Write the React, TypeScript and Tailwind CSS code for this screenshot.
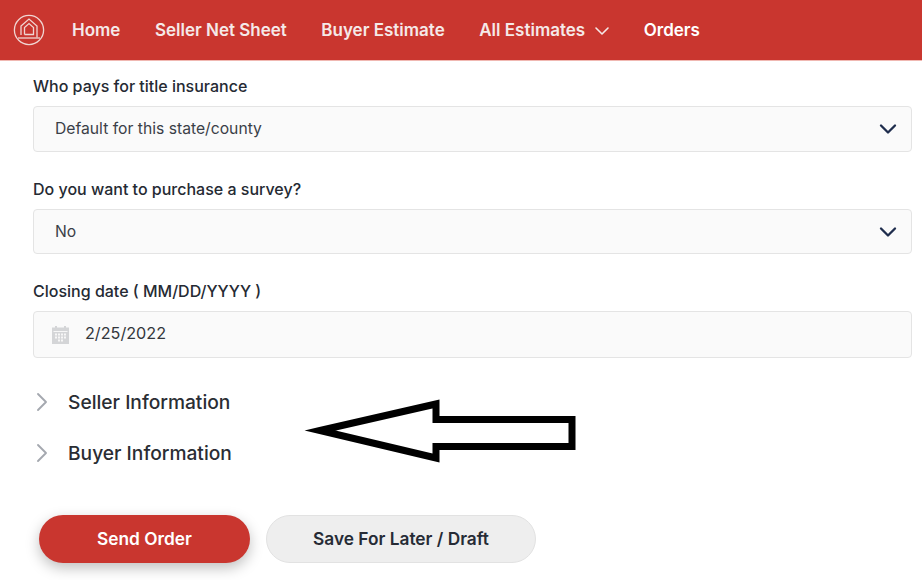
import { ChevronDown, ChevronRight } from 'lucide-react'

const navLinks = ['Home', 'Seller Net Sheet', 'Buyer Estimate']

function Logo() {
  return (
    <svg width="32" height="32" viewBox="0 0 32 32" fill="none" stroke="#f0d5d2" strokeWidth="1.3">
      <circle cx="16" cy="16" r="14.6" />
      <path d="M8 21V12L16 5L24 12V23.5" />
      <path d="M11.5 20.5V13.5L16 9.5L20.5 13.5V20.5H11.5" />
      <path d="M5 24H27" />
    </svg>
  )
}

function SelectField({ label, value, tall }: { label: string; value: string; tall?: boolean }) {
  return (
    <div className="flex flex-col">
      <label className="mb-[10px] h-[20px] text-[16px] leading-[20px] font-medium text-[#252a33]">{label}</label>
      <div
        className={
          tall
            ? 'flex h-[46px] items-center justify-between rounded-[4px] border border-[#e4e4e4] bg-[#fafafa] pl-[21px] pr-[9px]'
            : 'flex h-[45px] items-center justify-between rounded-[4px] border border-[#e4e4e4] bg-[#fafafa] pl-[21px] pr-[9px]'
        }
      >
        <span className="text-[15.7px] text-[#3a3f48]">{value}</span>
        <ChevronDown size={28} strokeWidth={2} className="text-[#1f2d4d]" />
      </div>
    </div>
  )
}

function Section({ title }: { title: string }) {
  return (
    <div className="flex h-[51px] items-center">
      <ChevronRight size={32} strokeWidth={1.4} className="ml-[-7px] mt-[-2px] text-[#a4a8af]" />
      <span className="ml-[10px] text-[19.2px] font-medium text-[#2a2d33]">{title}</span>
    </div>
  )
}

export default function App() {
  return (
    <div className="relative h-[580px] w-[922px] overflow-hidden bg-white font-['Inter','Liberation_Sans',sans-serif]">
      {/* Nav */}
      <header className="flex h-[61px] items-center border-b border-[#f0b8b2] bg-[#c9362f] pl-[13px]">
        <Logo />
        <nav className="ml-[27px] flex items-center gap-[34.5px] pt-[2px] text-[17px] font-semibold text-[#f5e9e8]">
          {navLinks.map((link) => (
            <a key={link}>{link}</a>
          ))}
          <a className="flex items-center">
            All Estimates
            <ChevronDown size={24} strokeWidth={1.6} className="ml-[5px] mr-[-5px]" />
          </a>
          <a className="text-white">Orders</a>
        </nav>
      </header>

      {/* Form */}
      <main className="ml-[33px] w-[879px] pt-[15px]">
        <div className="flex flex-col gap-[27px]">
          <SelectField label="Who pays for title insurance" value="Default for this state/county" tall />
          <SelectField label="Do you want to purchase a survey?" value="No" />
          <div className="flex flex-col">
            <label className="mb-[10px] h-[20px] text-[16px] leading-[20px] font-medium text-[#252a33]">
              Closing date ( MM/DD/YYYY )
            </label>
            <div className="flex h-[47px] items-center rounded-[4px] border border-[#e4e4e4] bg-[#fafafa] pl-[18px]">
              <svg width="17" height="18" viewBox="0 0 17 18" fill="#d4d5d7">
                <path d="M0 1.5H3V0H5V1.5H12V0H14V1.5H17V18H0Z" />
                <g fill="#f7f7f7">
                  <rect x="1.5" y="5" width="14" height="1" />
                  <rect x="3" y="7.5" width="2" height="2" />
                  <rect x="6" y="7.5" width="2" height="2" />
                  <rect x="9" y="7.5" width="2" height="2" />
                  <rect x="12" y="7.5" width="2" height="2" />
                  <rect x="3" y="10.5" width="2" height="2" />
                  <rect x="6" y="10.5" width="2" height="2" />
                  <rect x="9" y="10.5" width="2" height="2" />
                  <rect x="12" y="10.5" width="2" height="2" />
                  <rect x="6" y="13.5" width="2" height="2" />
                  <rect x="9" y="13.5" width="2" height="2" />
                </g>
              </svg>
              <span className="ml-[16px] pb-[2px] text-[16.2px] text-[#33363c]">2/25/2022</span>
            </div>
          </div>
        </div>

        <div className="mt-[19px] flex flex-col">
          <Section title="Seller Information" />
          <Section title="Buyer Information" />
        </div>

        <div className="ml-[6px] mt-[36px] flex gap-[16px]">
          <button className="h-[48px] w-[211px] rounded-full bg-[#c9362f] text-[17.3px] font-semibold text-white shadow-[0_5px_14px_rgba(0,0,0,0.25)]">
            Send Order
          </button>
          <button className="h-[48px] w-[270px] rounded-full border border-[#e2e2e2] bg-[#eeeeee] text-[17.3px] font-semibold text-[#262b35]">
            Save For Later / Draft
          </button>
        </div>
      </main>

      {/* Annotation arrow drawn over the page */}
      <svg className="absolute left-[300px] top-[392px]" width="282" height="80" viewBox="0 0 282 80" fill="#fff" stroke="#000" strokeWidth="7" strokeMiterlimit="8">
        <path d="M20 38.5L136 12V27.5H272V54.5H136V66Z" />
      </svg>
    </div>
  )
}
